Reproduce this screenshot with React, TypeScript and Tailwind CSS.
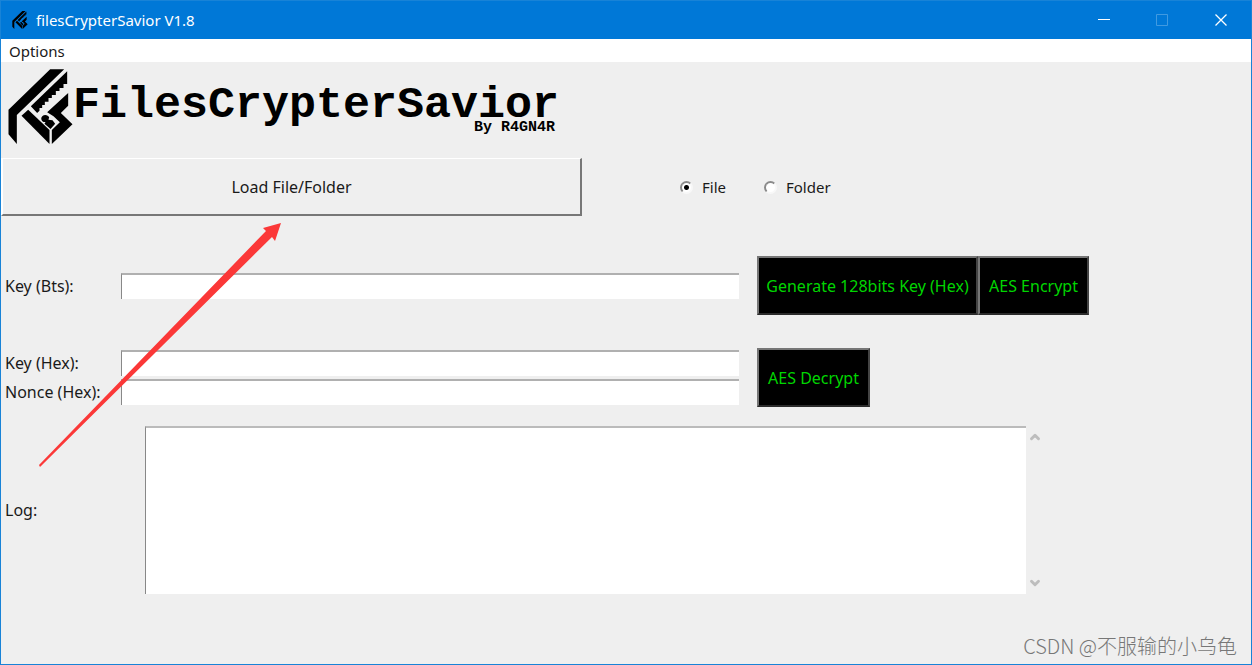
import { useState } from "react"
import { ChevronDown, ChevronUp } from "lucide-react"

function LogoMark({ className }: { className: string }) {
  return (
    <svg viewBox="24 26 194 225" className={className} fill="currentColor" aria-hidden="true">
      <path d="M150 27H192L50 164V251L25 222V148Z" />
      <path d="M201 33V71H190V83H178V92H167V104H155V113H145V124H134V134H126V143H118V151L111 158L92 138Z" />
      <path d="M84 148L148 209V251L64 166Z" />
      <path d="M204 98V136L182 158L217 192L155 251V209L179 186L160 168L141 156Z" />
      <path d="M127 167C133 161 145 164 147 171L145 178L157 180L165 190L151 206L133 190L136 185C125 187 119 174 127 167Z" />
    </svg>
  )
}

const fieldStyle = "w-full h-[26px] px-1 bg-white border-t-2 border-l border-t-[#b0b0b0] border-l-[#888888] outline-none"
const blackButton = "h-[59px] bg-black text-[#00d500] border-2 border-t-[#767676] border-l-[#767676] border-b-[#2b2b2b] border-r-[#444444] whitespace-nowrap"
const radioStyle = "appearance-none w-[13px] h-[13px] rounded-full bg-white border-2 border-t-[#8a8a8a] border-l-[#8a8a8a] border-b-[#f8f8f8] border-r-[#f8f8f8] checked:bg-[radial-gradient(circle,#000_0_2px,#fff_3px)]"

export default function App() {
  const [mode, setMode] = useState("file")
  const [keyBytes, setKeyBytes] = useState("")
  const [keyHex, setKeyHex] = useState("")
  const [nonce, setNonce] = useState("")
  const [log, setLog] = useState("")

  return (
    <div className="relative min-h-screen flex flex-col bg-[#efefef] border border-[#1883d7] text-[16px] leading-5 text-[#1a1a1a] font-['Noto_Sans',sans-serif]">
      <header className="flex items-center h-[38px] pl-[10px] bg-[#0078d7] text-white">
        <LogoMark className="w-[18px] h-[18px] mr-[7px] text-black" />
        <h1 className="flex-1 text-[15px]">filesCrypterSavior V1.8</h1>
        <button aria-label="Minimize" className="w-[58px] h-full flex items-center justify-center">
          <svg width="12" height="12" stroke="currentColor"><path d="M0 5.5H12" /></svg>
        </button>
        <button aria-label="Maximize" disabled className="w-[58px] h-full flex items-center justify-center text-[#409ae1]">
          <svg width="12" height="12" fill="none" stroke="currentColor"><path d="M.5 .5H11.5V11.5H.5Z" /></svg>
        </button>
        <button aria-label="Close" className="w-[60px] h-full flex items-center justify-center">
          <svg width="12" height="12" stroke="currentColor" strokeWidth="1.3"><path d="M.5 .5L11.5 11.5M11.5 .5L.5 11.5" /></svg>
        </button>
      </header>

      <nav className="flex items-center h-[23px] px-2 bg-white">
        <button className="text-[15px]">Options</button>
      </nav>

      <main className="flex-1 flex flex-col">
        <div className="flex h-24 pt-[7px] pl-[7px] text-black font-bold font-['Liberation_Mono',monospace]">
          <LogoMark className="w-[65px] h-[75px]" />
          <div className="flex flex-col items-end pt-[21px]">
            <span className="text-[45px] leading-8">FilesCrypterSavior</span>
            <span className="pr-1 text-[15px] leading-3">By R4GN4R</span>
          </div>
        </div>

        <div className="grid grid-cols-[minmax(0,1fr)_669px] items-center">
          <button className="h-[58px] border-2 border-t border-t-white border-l-white border-b-[#777777] border-r-[#777777]">Load File/Folder</button>
          <div className="flex gap-[38px] pl-[98px] text-[15px]">
            <label className="flex items-center gap-[9px]">
              <input type="radio" name="mode" className={radioStyle} checked={mode === "file"} onChange={() => setMode("file")} />
              File
            </label>
            <label className="flex items-center gap-[9px]">
              <input type="radio" name="mode" className={radioStyle} checked={mode === "folder"} onChange={() => setMode("folder")} />
              Folder
            </label>
          </div>
        </div>

        <div className="grid grid-cols-[120px_minmax(0,1fr)_512px] items-center mt-10">
          <label htmlFor="key-bytes" className="pl-1">Key (Bts):</label>
          <input id="key-bytes" className={fieldStyle} value={keyBytes} onChange={(e) => setKeyBytes(e.target.value)} />
          <div className="flex pl-[18px]">
            <button className={`${blackButton} w-[221px]`}>Generate 128bits Key (Hex)</button>
            <button className={`${blackButton} w-[111px]`}>AES Encrypt</button>
          </div>
        </div>

        <div className="grid grid-cols-[120px_minmax(0,1fr)_512px] items-center mt-[33px]">
          <div className="flex flex-col gap-[9px] pl-1">
            <label htmlFor="key-hex">Key (Hex):</label>
            <label htmlFor="nonce">Nonce (Hex):</label>
          </div>
          <div className="flex flex-col gap-[3px]">
            <input id="key-hex" className={fieldStyle} value={keyHex} onChange={(e) => setKeyHex(e.target.value)} />
            <input id="nonce" className={fieldStyle} value={nonce} onChange={(e) => setNonce(e.target.value)} />
          </div>
          <div className="pl-[18px]">
            <button className={`${blackButton} w-[113px]`}>AES Decrypt</button>
          </div>
        </div>

        <div className="grid grid-cols-[144px_minmax(0,1fr)_225px] items-center mt-[19px] mb-[69px]">
          <label htmlFor="log" className="pl-1">Log:</label>
          <textarea id="log" className="block w-full h-[168px] p-1 bg-white border-t-2 border-l border-t-[#bbbbbb] border-l-[#888888] resize-none outline-none" value={log} onChange={(e) => setLog(e.target.value)} />
          <div className="flex flex-col justify-between self-stretch pl-[2px] py-1 text-[#bdbdbd]">
            <button aria-label="Scroll up" className="w-[14px]"><ChevronUp size={14} strokeWidth={5} /></button>
            <button aria-label="Scroll down" className="w-[14px]"><ChevronDown size={14} strokeWidth={5} /></button>
          </div>
        </div>
      </main>

      {/* pointer towards the load button */}
      <svg viewBox="0 0 243 245" className="absolute left-[38px] top-[221px] w-[243px] h-[245px] pointer-events-none" fill="#fb3838" aria-hidden="true">
        <path d="M242 1L224 6L227 9L0 243L1 245L233 15L236 19Z" />
      </svg>
      <p className="absolute right-[14px] bottom-1 text-[20px] leading-7 font-light text-[#777777] font-['Noto_Sans_CJK_SC',sans-serif]">CSDN @不服输的小乌龟</p>
    </div>
  )
}
